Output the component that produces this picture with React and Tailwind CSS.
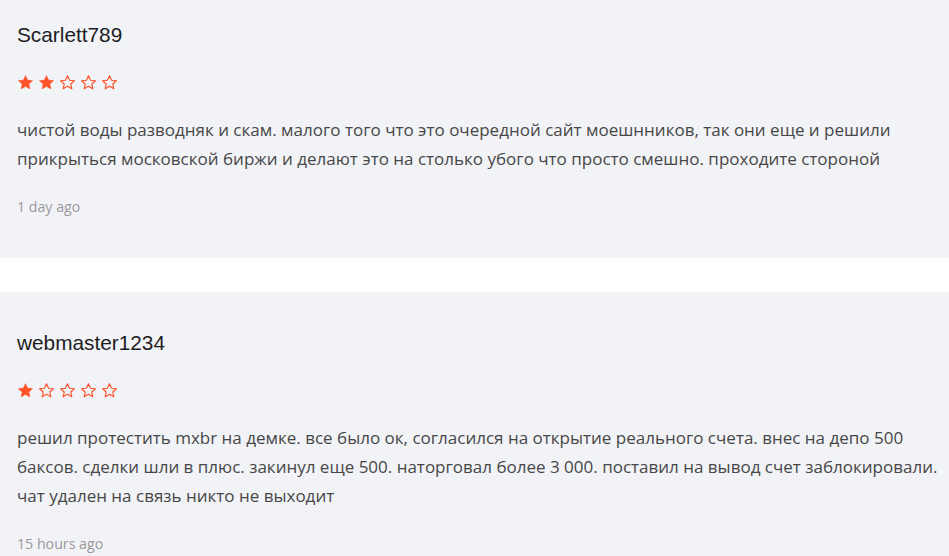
import React from "react";

const Star = ({ filled }) => (
  <svg width="17" height="17" viewBox="0 0 24 24" className="shrink-0">
    <path
      d="M12 2.5l2.9 6.3 6.9.7-5.2 4.6 1.5 6.8L12 17.4l-6.1 3.5 1.5-6.8-5.2-4.6 6.9-.7z"
      fill={filled ? "#ff5126" : "none"}
      stroke="#ff5126"
      strokeWidth={filled ? 1 : 1.6}
      strokeLinejoin="round"
    />
  </svg>
);

const Review = ({ name, rating, lines, date, first }) => (
  <div className={`bg-[#f2f3f7] pl-[17px] pt-[39px] pb-[41px] ${first ? "-mt-[16px]" : ""}`}>
    <div className="text-[20.8px] leading-[24px] text-[#1d1d1f]" style={{ fontFamily: '"Liberation Sans", Arial, sans-serif' }}>
      {name}
    </div>
    <div className="mt-[27px] flex gap-[4px] h-[16px] items-center">
      {[0, 1, 2, 3, 4].map((i) => (
        <Star key={i} filled={i < rating} />
      ))}
    </div>
    <div className="mt-[25px] text-[17px] leading-[29px] text-[#474747] whitespace-nowrap" style={{ fontFamily: '"Open Sans", sans-serif' }}>
      {lines.map((l, i) => (
        <div key={i}>{l}</div>
      ))}
    </div>
    <div className="mt-[24px] text-[14.2px] leading-[20px] text-[#999999]" style={{ fontFamily: '"Open Sans", sans-serif' }}>
      {date}
    </div>
  </div>
);

export default function App() {
  return (
    <div className="w-[949px] h-[556px] overflow-hidden bg-white">
      <Review
        first
        name="Scarlett789"
        rating={2}
        lines={[
          "чистой воды разводняк и скам. малого того что это очередной сайт моешнников, так они еще и решили",
          "прикрыться московской биржи и делают это на столько убого что просто смешно. проходите стороной",
        ]}
        date="1 day ago"
      />
      <div className="h-[34px] bg-white" />
      <Review
        name="webmaster1234"
        rating={1}
        lines={[
          "решил протестить mxbr на демке. все было ок, согласился на открытие реального счета. внес на депо 500",
          "баксов. сделки шли в плюс. закинул еще 500. наторговал более 3 000. поставил на вывод счет заблокировали.",
          "чат удален на связь никто не выходит",
        ]}
        date="15 hours ago"
      />
    </div>
  );
}
